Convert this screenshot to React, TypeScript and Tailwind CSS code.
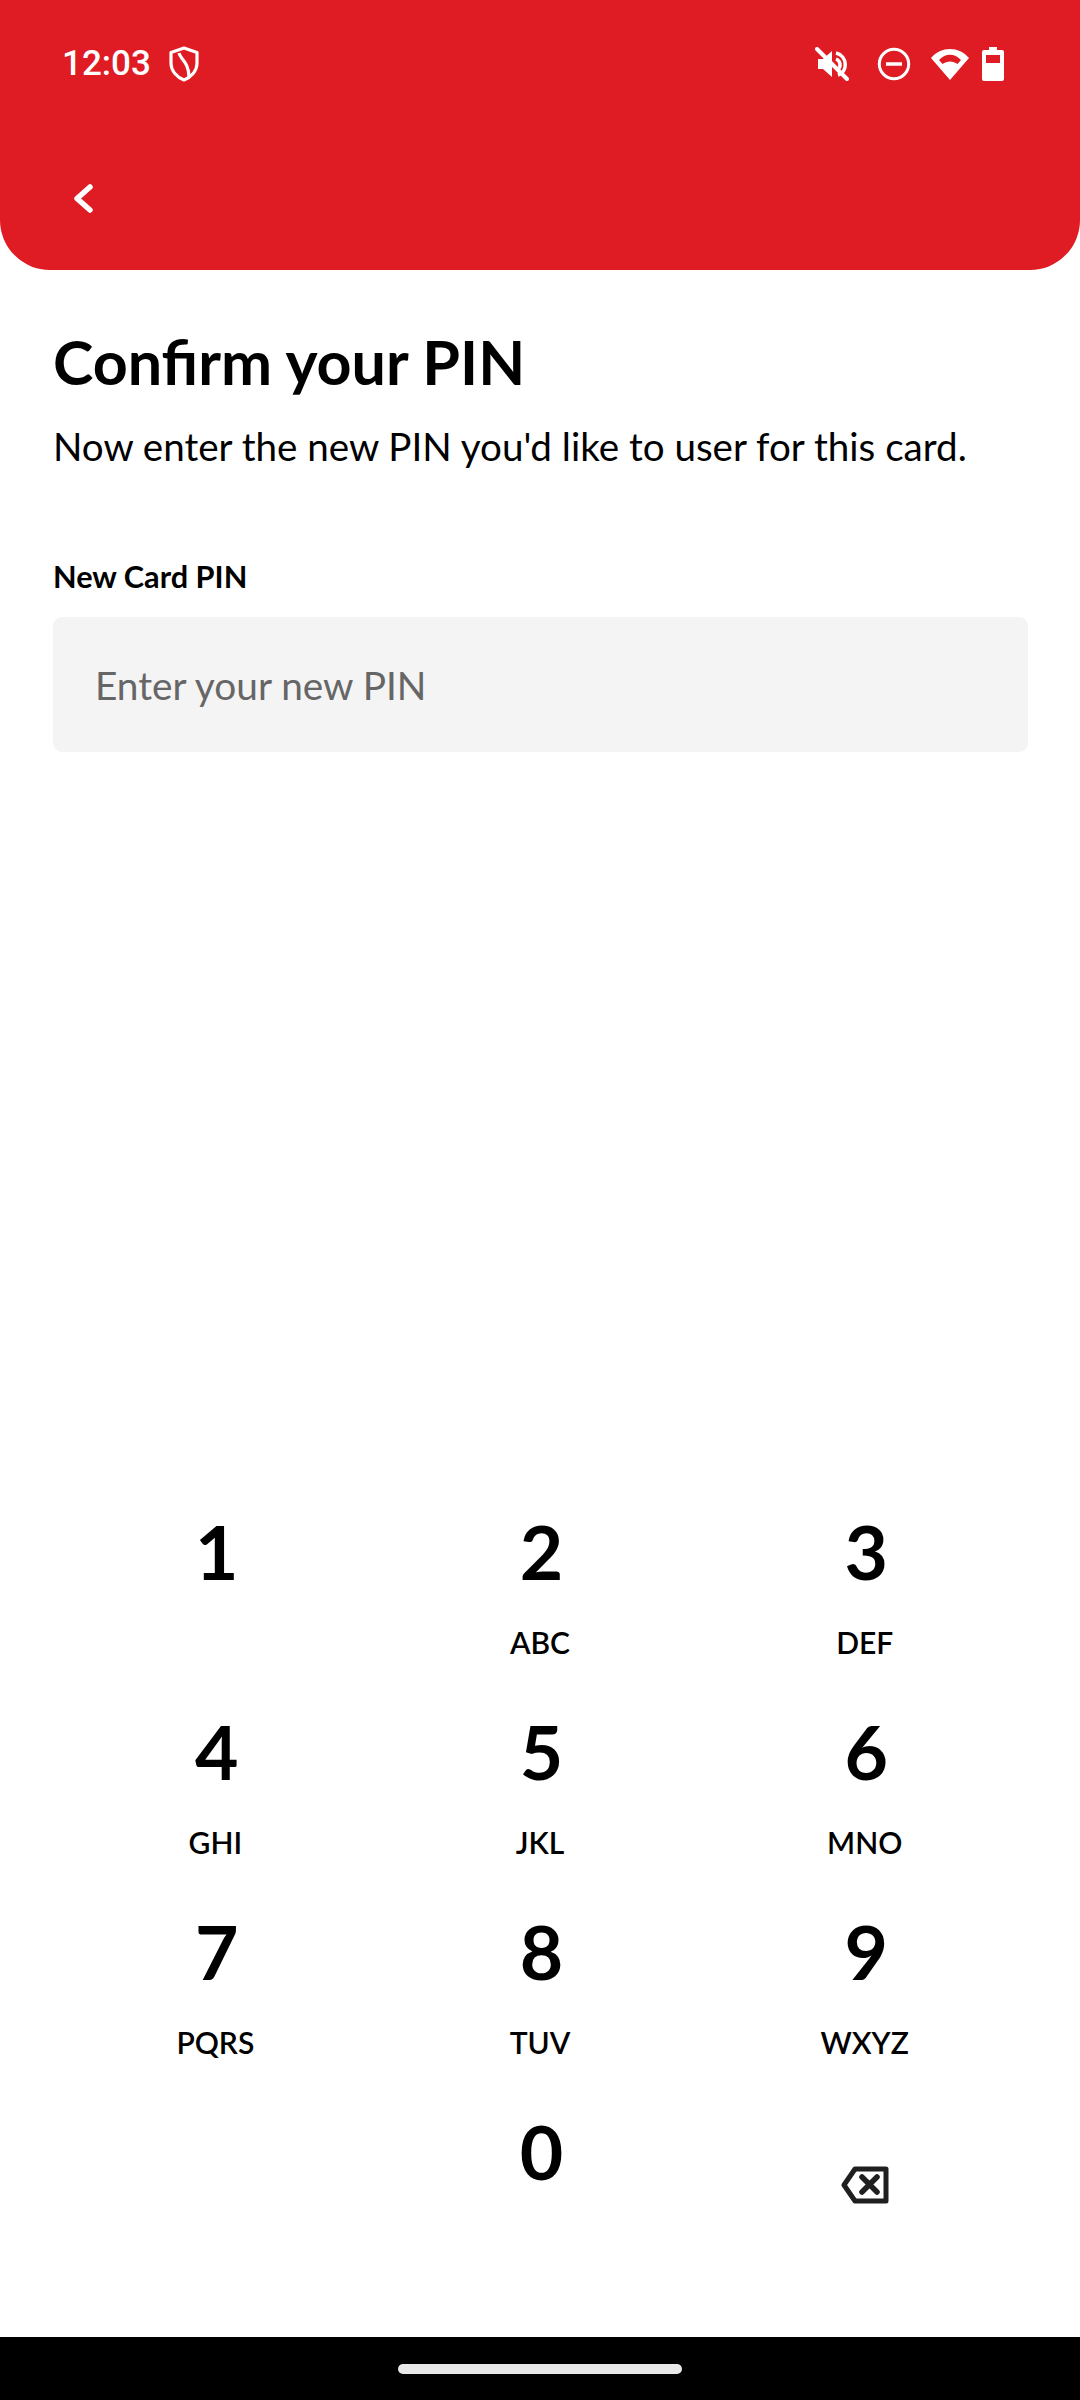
const keys: [string, string][] = [
  ["1", ""], ["2", "ABC"], ["3", "DEF"],
  ["4", "GHI"], ["5", "JKL"], ["6", "MNO"],
  ["7", "PQRS"], ["8", "TUV"], ["9", "WXYZ"],
];

function Key({ n, l }: { n: string; l: string }) {
  return (
    <div className="flex h-[200px] flex-col items-center">
      <div className="h-[102px] pt-[11px] pl-[3px] text-[75px] leading-[80px] font-bold text-black">{n}</div>
      <div className="mt-[22px] text-[30px] leading-[36px] font-semibold text-black">{l}</div>
    </div>
  );
}

export default function App() {
  return (
    <div className="flex h-[2400px] w-[1080px] flex-col bg-white font-['Lato','Noto_Sans',sans-serif]">
      <header className="h-[270px] shrink-0 rounded-b-[50px] bg-[#df1b23] px-[62px] pt-[42px] text-white">
        <div className="flex h-[44px] items-center justify-between pr-[14px]">
          <div className="flex items-center gap-[17px]">
            <span className="font-['Roboto',sans-serif] text-[35px] leading-[44px] font-medium">12:03</span>
            <svg width="32" height="36" viewBox="0 0 32 36" fill="none" stroke="white" strokeWidth="3.2" strokeLinejoin="round">
              <path d="M16 2 L29 6.500 V17 C29 25 23 31 16 34 C9 31 3 25 3 17 V6.500 Z" />
              <path d="M11 7 C12 13 21 16 21 31" />
            </svg>
          </div>
          <div className="flex items-center">
            <svg width="34" height="34" viewBox="0 0 34 34" fill="none" stroke="white" className="mr-[28px]">
              <path d="M2 2 L32 32" strokeWidth="4" strokeLinecap="round" />
              <path d="M3 12 H8 L17 4 V30 L8 22 H3 Z" fill="white" stroke="none" />
              <path d="M21 6 C33 9 33 25 23 28 M21 12 C26 14 26 20 23 22" strokeWidth="3.500" />
            </svg>
            <svg width="34" height="34" viewBox="0 0 34 34" fill="none" stroke="white" className="mr-[18px]">
              <circle cx="17" cy="17" r="14.7" strokeWidth="3" />
              <path d="M9 17 H25" strokeWidth="3.500" />
            </svg>
            <svg width="42" height="34" viewBox="0 0 40 34" className="mr-[11px]">
              <path fillRule="evenodd" fill="white" d="M20 33 L1 11 C11 -1 29 -1 39 11 Z M9 13 L12.500 17 C17 13.500 23 13.500 27.500 17 L31 13 C24.500 6 15.500 6 9 13 Z" />
            </svg>
            <svg width="22" height="34" viewBox="0 0 22 34">
              <path fillRule="evenodd" fill="white" d="M7 0 H15 V3 H20 Q22 3 22 5 V32 Q22 34 20 34 H2 Q0 34 0 32 V5 Q0 3 2 3 H7 Z M4 8 V16 H18 V8 Z" />
            </svg>
          </div>
        </div>
        <svg width="24" height="32" viewBox="0 0 24 32" fill="none" stroke="white" strokeWidth="5.500" strokeLinecap="round" strokeLinejoin="round" className="mt-[97px] ml-[9px]">
          <path d="M19 4 L6 15.500 L19 27" />
        </svg>
      </header>

      <main className="flex grow flex-col px-[53px]">
        <h1 className="mt-[56px] text-[61px] leading-[72px] font-bold text-black">Confirm your PIN</h1>
        <p className="mt-[23px] text-[38.600px] leading-[50px] whitespace-nowrap text-black">Now enter the new PIN you'd like to user for this card.</p>
        <label className="mt-[86px] text-[30.700px] leading-[40px] font-bold text-black">New Card PIN</label>
        <div className="mt-[20px] flex h-[135px] w-[975px] items-center rounded-[9px] bg-[#f4f4f4] px-[42px] pt-[2px] text-[38.800px] text-[#666666]">Enter your new PIN</div>

        <div className="mt-[748px] grid grid-cols-3">
          {keys.map(([n, l]) => <Key key={n} n={n} l={l} />)}
          <div />
          <Key n="0" l="" />
          <div className="flex justify-center pt-[66px]">
            <svg width="48" height="38" viewBox="0 0 48 38" fill="none" stroke="#1f1f1f" strokeWidth="5" strokeLinejoin="round" strokeLinecap="round">
              <path d="M14 3 H45 V35 H14 L3 19 Z" />
              <path d="M21 11 L36 26 M36 11 L21 26" strokeWidth="5.500" />
            </svg>
          </div>
        </div>
      </main>

      <footer className="flex h-[63px] shrink-0 items-start justify-center bg-black pt-[27px]">
        <div className="h-[10px] w-[284px] rounded-full bg-[#e8e8e8]" />
      </footer>
    </div>
  );
}
